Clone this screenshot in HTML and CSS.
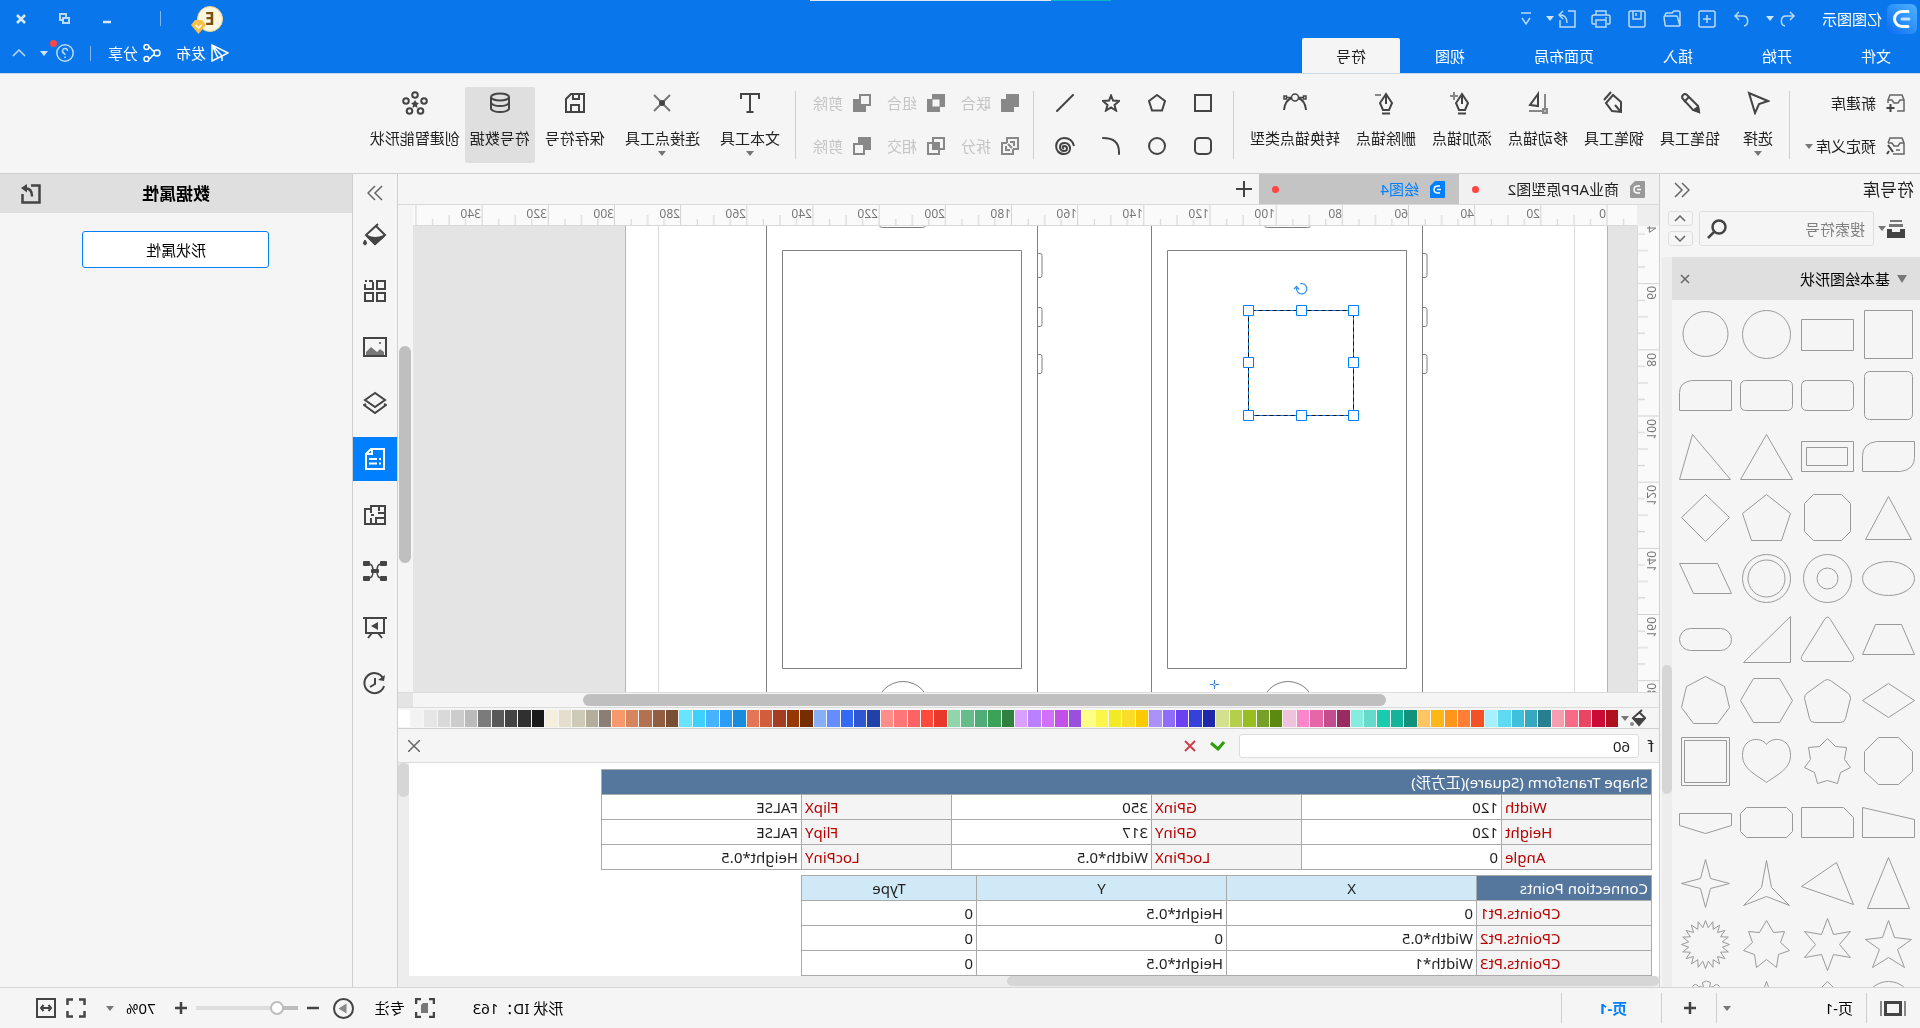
FILE: index.html
```html
<!DOCTYPE html>
<html lang="zh-CN">
<head>
<meta charset="utf-8">
<meta name="viewport" content="width=device-width, initial-scale=1">
<title>亿图图示</title>
<link rel="stylesheet" href="styles.css">
</head>
<body>
<div class="app">

<header class="titlebar">
  <div class="capture-strip"><i class="capture-teal"></i><i class="capture-light"></i></div>
  <div class="title-row">
    <svg class="logo" width="30" height="30" viewBox="0 0 30 30"><defs><linearGradient id="lg" x1="0" y1="0" x2="1" y2="1"><stop offset="0" stop-color="#4db4ff"/><stop offset="1" stop-color="#0b6cf5"/></linearGradient></defs><rect width="30" height="30" rx="6" fill="url(#lg)"/><path d="M9 7.5h6a7.5 7.5 0 0 1 0 15H9" fill="none" stroke="#fff" stroke-width="3" stroke-linecap="round"/><path d="M8 15H15" stroke="#bfe2ff" stroke-width="3" stroke-linecap="round"/></svg>
    <span class="app-name">亿图图示</span>
    <div class="quick">
      <button class="qbtn" aria-label="撤销"><svg class="ico thin" width="18" height="18" viewBox="0 0 18 18"><path d="M6 2 2 6l4 4M2 6h8c6 0 6 9 1 10"/></svg></button>
      <button class="qbtn caret-btn" aria-label="撤销列表"><i class="caret light"></i></button>
      <button class="qbtn" aria-label="重做"><svg class="ico thin" width="18" height="18" viewBox="0 0 18 18"><path d="M12 2l4 4-4 4M16 6H8c-6 0-6 9-1 10"/></svg></button>
      <button class="qbtn" aria-label="新建"><svg class="ico thin" width="18" height="18" viewBox="0 0 18 18"><rect x="1" y="1" width="16" height="16" rx="2"/><path d="M9 5v8M5 9h8"/></svg></button>
      <button class="qbtn" aria-label="打开"><svg class="ico thin" width="18" height="18" viewBox="0 0 18 18"><path d="M1 16V3Q1 1 3 1h4l2 2h5q2 0 2 3M1 16h14q1 0 1-1L17 7q0-1-1-1H5Q4 6 3.500 7L1 16"/></svg></button>
      <button class="qbtn" aria-label="保存"><svg class="ico thin" width="18" height="18" viewBox="0 0 18 18"><rect x="1" y="1" width="16" height="16" rx="2"/><path d="M5 1v8h8V1M10 3v3"/></svg></button>
      <button class="qbtn" aria-label="打印"><svg class="ico thin" width="20" height="18" viewBox="0 0 20 18"><path d="M5 5V1h10v4M4 14H2q-1 0-1-1V7q0-2 2-2h14q2 0 2 2v6q0 1-1 1h-2M5 10h10v7H5zM4 8h2"/></svg></button>
      <button class="qbtn export" aria-label="导出"><svg class="ico thin" width="18" height="18" viewBox="0 0 18 18"><path d="M8 1H1v16h15v-7M13 1l4 4-4 4M16 5q-7 0-7 8"/></svg></button>
      <button class="qbtn caret-btn" aria-label="导出列表"><i class="caret light"></i></button>
      <button class="qbtn more" aria-label="自定义快速访问"><svg class="ico thin" width="10" height="14" viewBox="0 0 10 14"><path d="M0 1h10M1 6l4 6 4-6"/></svg></button>
    </div>
    <div class="window-tools">
      <button class="avatar" aria-label="账户">E<svg class="badge" width="15" height="15" viewBox="0 0 15 15"><path d="M4 1h7l4 5-7.500 9L0 6z" fill="#fbc04a"/><path d="M4.500 6l3 3 3-3" fill="none" stroke="#fff" stroke-width="1.5"/></svg></button>
      <i class="vline"></i>
      <button class="wbtn" aria-label="最小化"><svg class="ico bold" width="10" height="10" viewBox="0 0 10 10"><path d="M1 8h8"/></svg></button>
      <button class="wbtn" aria-label="还原"><svg class="ico" width="12" height="12" viewBox="0 0 12 12"><path d="M1 5h6v5H1zM4 4V1h6v6H8"/></svg></button>
      <button class="wbtn" aria-label="关闭"><svg class="ico bold" width="10" height="10" viewBox="0 0 10 10"><path d="M1 1l8 8M9 1L1 9"/></svg></button>
    </div>
  </div>
  <div class="tab-row">
    <nav class="menu">
      <button class="menu-tab first">文件</button><button class="menu-tab">开始</button><button class="menu-tab">插入</button><button class="menu-tab">页面布局</button><button class="menu-tab">视图</button><button class="menu-tab active">符号</button>
    </nav>
    <div class="share-tools">
      <button class="sbtn publish"><svg class="ico thin white" width="18" height="18" viewBox="0 0 18 18"><path d="M1 9L17 1v16l-6-3zM11 14L17 1 7 12v5"/></svg>发布</button>
      <button class="sbtn"><svg class="ico thin white" width="18" height="18" viewBox="0 0 18 18"><circle cx="4" cy="9" r="3"/><circle cx="14.500" cy="3" r="2.500"/><circle cx="14.500" cy="15" r="2.500"/><path d="M6.500 7.500L9 6q1-2 3-3M6.500 10.500L9 12q1 2 3 3"/></svg>分享</button>
      <i class="vline"></i>
      <button class="help" aria-label="帮助"><svg class="ico thin" width="18" height="18" viewBox="0 0 18 18"><circle cx="9" cy="9" r="8.200"/><path d="M6.500 7a2.500 2.500 0 1 1 3.500 2.300q-1 .5-1 1.700M9 12.500v1.500"/></svg><i class="red-dot"></i></button>
      <button class="qbtn" aria-label="帮助列表"><i class="caret light"></i></button>
      <button class="collapse" aria-label="收起功能区"><svg class="ico thin" width="14" height="8" viewBox="0 0 14 8"><path d="M1 7l6-6 6 6"/></svg></button>
    </div>
  </div>
</header>

<section class="ribbon" aria-label="符号工具">
  <div class="group libs">
    <button class="row-btn"><svg class="ico mid thin" width="19" height="18" viewBox="0 0 19 18"><path d="M8 17H1V6l2-5h12l2 5v3M1 6h4l2 3h4l2-3h4"/><path d="M14.500 10v8M10.500 14h8" stroke="#444" stroke-width="2"/></svg>新建库</button>
    <button class="row-btn"><svg class="ico mid thin" width="19" height="18" viewBox="0 0 19 18"><path d="M12 17H1V6l2-5h12l2 5M1 6h4l2 3h4l2-3h4M5 13h4"/><path d="M17 8l-5 7M16 14l2 3" stroke="#444" stroke-width="2"/></svg>预定义库<i class="caret"></i></button>
  </div>
  <div class="group tools">
    <button class="tool"><svg class="ico" width="24" height="24" viewBox="0 0 24 24"><path d="M2 10L21 2l-6 20-4-9z"/></svg><span>选择</span><i class="caret"></i></button>
    <button class="tool"><svg class="ico" width="24" height="24" viewBox="0 0 24 24"><path d="M3 21l1-6L15 4q2-2 4 0 2 2 0 4L9 19zM13 6l5 5"/><path d="M3 21l1-5 4 3z" fill="#444"/></svg><span>铅笔工具</span></button>
    <button class="tool"><svg class="ico" width="24" height="24" viewBox="0 0 24 24"><path d="M5 21l0-10 8-7 7 8-6 8zM5 21l6-7M15 1l7 8"/></svg><span>钢笔工具</span></button>
    <button class="tool"><svg class="ico" width="24" height="24" viewBox="0 0 24 24"><path d="M5 3v14M7 20h14" stroke="#888"/><path d="M3 18h4v4H3z" stroke="#888" fill="#bbb"/><path d="M12 3l8 11-8 1z"/></svg><span>移动锚点</span></button>
    <button class="tool"><svg class="ico" width="24" height="24" viewBox="0 0 24 24"><path d="M12 3l6 9-3 7H9l-3-7zM12 3v10M8 22.500h8"/><path d="M20 1v8M16 5h8" stroke="#888"/></svg><span>添加锚点</span></button>
    <button class="tool"><svg class="ico" width="24" height="24" viewBox="0 0 24 24"><path d="M12 3l6 9-3 7H9l-3-7zM12 3v10M8 22.500h8"/><path d="M17 4h6" stroke="#888"/></svg><span>删除锚点</span></button>
    <button class="tool"><svg class="ico" width="24" height="24" viewBox="0 0 24 24"><path d="M1 19q1-10 8-12M23 19q-1-10-8-12"/><circle cx="12" cy="6.500" r="3.500" stroke-width="1.5"/><path d="M1 5h2.500v3H1zM20.500 5H23v3h-2.500zM3.500 6.500H8M16 6.500h4.500" stroke-width="1.5"/></svg><span>转换锚点类型</span></button>
  </div>
  <div class="group prims">
    <button class="prim" aria-label="矩形"><svg class="ico" width="18" height="18" viewBox="0 0 18 18"><rect x="1" y="1" width="16" height="16"/></svg></button>
    <button class="prim" aria-label="五边形"><svg class="ico" width="18" height="18" viewBox="0 0 18 18"><path d="M9 1l8 6-3 9.500H4L1 7z"/></svg></button>
    <button class="prim" aria-label="星形"><svg class="ico" width="18" height="18" viewBox="0 0 18 18"><path d="M9 1.500l2 5 6 .5-4.500 4 1.500 5.500-5-3-5 3L5.500 11 1 7l6-.5z"/></svg></button>
    <button class="prim" aria-label="直线"><svg class="ico" width="18" height="18" viewBox="0 0 18 18"><path d="M1 1l16 16" stroke-linecap="round"/></svg></button>
    <button class="prim" aria-label="圆角矩形"><svg class="ico" width="18" height="18" viewBox="0 0 18 18"><rect x="1" y="1" width="16" height="16" rx="4"/></svg></button>
    <button class="prim" aria-label="圆"><svg class="ico" width="18" height="18" viewBox="0 0 18 18"><circle cx="9" cy="9" r="8"/></svg></button>
    <button class="prim" aria-label="弧"><svg class="ico" width="18" height="18" viewBox="0 0 18 18"><path d="M1 17V15Q1 1 17 1" stroke-linecap="round"/></svg></button>
    <button class="prim" aria-label="螺旋线"><svg class="ico" width="20" height="18" viewBox="0 0 20 18"><path d="M1 9Q3 1 11 1c10 0 11 16 0 16C3 17 3 6 10.500 6c6 0 6 8 .5 8-4 0-4-5 0-5 2 0 2 2 0 2.500"/></svg></button>
  </div>
  <div class="group bools">
    <button class="row-btn" disabled><svg width="18" height="18" viewBox="0 0 18 18"><path d="M0 0h13v5h5v13H5v-5H0z" fill="#888"/></svg>联合</button>
    <button class="row-btn" disabled><svg width="18" height="18" viewBox="0 0 18 18"><path d="M0 0h13v5h5v13H5v-5H0z" fill="#888"/><rect x="5.500" y="5.500" width="7" height="7" fill="#f5f5f5"/></svg>组合</button>
    <button class="row-btn" disabled><svg width="18" height="18" viewBox="0 0 18 18"><path d="M5 5h13v13H5z" fill="#888"/><rect x="1" y="1" width="10" height="10" fill="#f5f5f5" stroke="#888" stroke-width="2"/></svg>剪除</button>
    <button class="row-btn" disabled><svg class="ico" width="18" height="18" viewBox="0 0 18 18"><g stroke="#888"><path d="M6 12H1V1h11v5M12 6h5v11H6v-5"/><path d="M5 9V5h4M13 9v4H9M7 11l4-4"/></g></svg>拆分</button>
    <button class="row-btn" disabled><svg width="18" height="18" viewBox="0 0 18 18"><path d="M1 1h11v11H1zM6 6h11v11H6z" fill="none" stroke="#888" stroke-width="2"/><path d="M6 6h6v6H6z" fill="#888"/></svg>相交</button>
    <button class="row-btn" disabled><svg width="18" height="18" viewBox="0 0 18 18"><path d="M0 0h13v13H0z" fill="#888"/><rect x="7" y="7" width="10" height="10" fill="#f5f5f5" stroke="#888" stroke-width="2"/></svg>剪除</button>
  </div>
  <div class="group wide">
    <button class="tool"><svg class="ico" width="24" height="24" viewBox="0 0 24 24"><path d="M3 8V3h18v5M12 3v18M8.500 21h7"/></svg><span>文本工具</span><i class="caret"></i></button>
    <button class="tool"><svg class="ico" width="24" height="24" viewBox="0 0 24 24"><path d="M4 4l16 16M20 4L4 20" stroke="#777"/><circle cx="12" cy="12" r="2" fill="#444"/></svg><span>连接点工具</span><i class="caret"></i></button>
    <button class="tool"><svg class="ico" width="24" height="24" viewBox="0 0 24 24"><path d="M3 3h13l5 5v13H3zM8 3v5h6V3M8 21v-7h8v7"/></svg><span>保存符号</span></button>
    <button class="tool snug on"><svg class="ico" width="24" height="24" viewBox="0 0 24 24"><ellipse cx="12" cy="6" rx="9" ry="3.500"/><path d="M3 6v12q2 3 9 3t9-3V6M3 12q2 3 9 3t9-3"/></svg><span>符号数据</span></button>
    <button class="tool snug"><svg class="ico" width="26" height="24" viewBox="0 0 26 24"><circle cx="13" cy="4" r="2.800"/><circle cx="4" cy="10" r="2.800"/><circle cx="22" cy="10" r="2.800"/><circle cx="7.500" cy="20" r="2.800"/><circle cx="18.500" cy="20" r="2.800"/><path d="M13 9l1.500 2.500 2.500.5-2 2 .5 3-2.500-1.500-2.500 1.500.5-3-2-2 2.500-.5z" fill="#444" stroke="none"/></svg><span>创建智能形状</span></button>
  </div>
</section>

<main class="work">
  <aside class="library">
    <div class="lib-head"><h2>符号库</h2><button class="plain" aria-label="收起"><svg class="ico mid thin" width="16" height="16" viewBox="0 0 16 16"><path d="M8 1L1 8l7 7M15 1L8 8l7 7"/></svg></button></div>
    <div class="lib-search">
      <button class="plain libpick" aria-label="选择库"><svg width="18" height="18" viewBox="0 0 18 18"><path d="M3 0h12v2H3zM2 4h14v3H2z" fill="#777"/><path d="M0 9h5v3h8V9h5v9H0z" fill="#444"/></svg><i class="caret"></i></button>
      <label class="search"><input type="text" placeholder="搜索符号" aria-label="搜索符号"><svg class="ico bold" width="20" height="20" viewBox="0 0 20 20"><circle cx="8" cy="8" r="6.500"/><path d="M13 13l6 6"/></svg></label>
      <div class="updown"><button aria-label="上一个"><svg class="ico mid thin" width="12" height="7" viewBox="0 0 12 7"><path d="M1 6l5-5 5 5"/></svg></button><button aria-label="下一个"><svg class="ico mid thin" width="12" height="7" viewBox="0 0 12 7"><path d="M1 1l5 5 5-5"/></svg></button></div>
    </div>
    <div class="lib-body">
      <div class="lib-list">
        <div class="lib-section"><i class="tri"></i><h3>基本绘图形状</h3><button class="plain" aria-label="关闭"><svg class="ico mid thin" width="10" height="10" viewBox="0 0 10 10"><path d="M1 1l8 8M9 1L1 9"/></svg></button></div>
        <div class="shapes">
          <svg viewBox="-30.5 -30.5 61 61"><path d="M-24-24h48v48h-48z"/></svg>
          <svg viewBox="-30.5 -30.5 61 61"><path d="M-26-15h52v31h-52z"/></svg>
          <svg viewBox="-30.5 -30.5 61 61"><circle r="24"/></svg>
          <svg viewBox="-30.5 -30.5 61 61"><circle r="22.500" cy="-.5"/></svg>
          <svg viewBox="-30.5 -30.5 61 61"><rect x="-24" y="-24" width="48" height="48" rx="5"/></svg>
          <svg viewBox="-30.5 -30.5 61 61"><rect x="-26" y="-15" width="52" height="30" rx="5"/></svg>
          <svg viewBox="-30.5 -30.5 61 61"><rect x="-26" y="-15" width="52" height="30" rx="5"/></svg>
          <svg viewBox="-30.5 -30.5 61 61"><path d="M-26-15h40q12 2 12 12v18h-52z"/></svg>
          <svg viewBox="-30.5 -30.5 61 61"><path d="M-26-15h38q14 2 14 14v16h-38q-14-2-14-14z"/></svg>
          <svg viewBox="-30.5 -30.5 61 61"><path d="M-26-15h52v30h-52zM-20-9h41v18h-41z"/></svg>
          <svg viewBox="-30.5 -30.5 61 61"><path d="M0-22L26 23h-52z"/></svg>
          <svg viewBox="-30.5 -30.5 61 61"><path d="M13-22L26 23h-51z"/></svg>
          <svg viewBox="-30.5 -30.5 61 61"><path d="M0-21L23 22h-46z"/></svg>
          <svg viewBox="-30.5 -30.5 61 61"><path d="M-14-23h28l9 9v28l-9 9h-28l-9-9v-28z"/></svg>
          <svg viewBox="-30.5 -30.5 61 61"><path d="M0-23L24-4 15 23h-30l-9-27z"/></svg>
          <svg viewBox="-30.5 -30.5 61 61"><path d="M0-23L24 0 0 24-24 0z"/></svg>
          <svg viewBox="-30.5 -30.5 61 61"><ellipse rx="26" ry="17"/></svg>
          <svg viewBox="-30.5 -30.5 61 61"><circle r="24"/><circle r="10.500"/></svg>
          <svg viewBox="-30.5 -30.5 61 61"><circle r="24"/><circle r="18.500"/></svg>
          <svg viewBox="-30.5 -30.5 61 61"><path d="M-12-15h38L12 15h-38z"/></svg>
          <svg viewBox="-30.5 -30.5 61 61"><path d="M-13-15h26L26 15h-52z"/></svg>
          <svg viewBox="-30.5 -30.5 61 61"><path d="M-3-20q3-5 6 0L26 17q1 5-4 5h-44q-5 0-4-5z"/></svg>
          <svg viewBox="-30.5 -30.5 61 61"><path d="M-24-23V23h47z"/></svg>
          <svg viewBox="-30.5 -30.5 61 61"><rect x="-26" y="-11" width="52" height="22" rx="11"/></svg>
          <svg viewBox="-30.5 -30.5 61 61"><path d="M0-17L26 0 0 17-26 0z"/></svg>
          <svg viewBox="-30.5 -30.5 61 61"><path d="M-3-20q3-2 6 0L21-7q2 2 2 5l-5 20q-1 4-5 4h-26q-4 0-5-4l-5-20q0-3 2-5z"/></svg>
          <svg viewBox="-30.5 -30.5 61 61"><path d="M-13-22h26L26 0 13 22h-26L-26 0z"/></svg>
          <svg viewBox="-30.5 -30.5 61 61"><path d="M0-24L19-14 24 7 12 23h-24L-24 7l5-21z"/></svg>
          <svg viewBox="-30.5 -30.5 61 61"><path d="M-10-24h20l14 14v20l-14 13h-20l-14-13v-20z"/></svg>
          <svg viewBox="-30.5 -30.5 61 61"><path d="M0-23L8-15l11 1-2 12 6 8-10 5-3 11-10-3-10 3-3-11-10-5 6-8-2-12 11-1z"/></svg>
          <svg viewBox="-30.5 -30.5 61 61"><path d="M0-17C5-25 24-25 24-6 24 8 9 14 0 21-9 14-24 8-24-6-24-25-5-25 0-17z"/></svg>
          <svg viewBox="-30.5 -30.5 61 61"><path d="M-24-24h48v48h-48zM-21-21h42v42h-42z"/></svg>
          <svg viewBox="-30.5 -30.5 61 61"><path d="M-26-3L26-15v30h-52z"/></svg>
          <svg viewBox="-30.5 -30.5 61 61"><path d="M-16-15h42v30h-52V-5z"/></svg>
          <svg viewBox="-30.5 -30.5 61 61"><path d="M-20-15h40l6 6v18l-6 6h-40l-6-6v-18z"/></svg>
          <svg viewBox="-30.5 -30.5 61 61"><path d="M-26-9h52V3L0 11-26 3z"/></svg>
          <svg viewBox="-30.5 -30.5 61 61"><path d="M0-26L21 25h-42z"/></svg>
          <svg viewBox="-30.5 -30.5 61 61"><path d="M26 3L-9-21l-17 42z"/></svg>
          <svg viewBox="-30.5 -30.5 61 61"><path d="M0-23L5 4l18 18-23-9-23 9L-5 4z"/></svg>
          <svg viewBox="-30.5 -30.5 61 61"><path d="M0-24L5-5 24 0 5 5 0 24-5 5-24 0-5-5z"/></svg>
          <svg viewBox="-30.5 -30.5 61 61"><path d="M0-24L6-7l17 2L9 5l7 18-16-10-16 10L-9 5-23-5-6-7z"/></svg>
          <svg viewBox="-30.5 -30.5 61 61"><path d="M0-26L6-10l17-3L12 0l11 13-17-3L0 26-6 10l-17 3L-12 0l-11-13 17 3z"/></svg>
          <svg viewBox="-30.5 -30.5 61 61"><path d="M0-24L7-12l11-1-4 11 9 8-11 4-2 13-10-8-10 8-2-13-11-4 9-8-4-11 11 1z"/></svg>
          <svg viewBox="-30.5 -30.5 61 61"><defs><path id="q" d="M0-24L2.700-16.800 7.400-22.800 7.700-15.100 14.100-19.400 12-12 19.400-14.100 15.100-7.700 22.800-7.400 16.800-2.700 24 0"/></defs><use href="#q"/><use href="#q" transform="rotate(90)"/><use href="#q" transform="rotate(180)"/><use href="#q" transform="rotate(270)"/></svg>
          <svg viewBox="-30.5 -30.5 61 61"><ellipse rx="24" ry="24"/></svg>
          <svg viewBox="-30.5 -30.5 61 61"><path d="M0-24L10-14l10 2-3 12 6 10-46 0 6-10-3-12 10-2z"/></svg>
          <svg viewBox="-30.5 -30.5 61 61"><path d="M0-24L5-10 20-6 0 20-20-6-5-10z"/></svg>
          <svg viewBox="-30.5 -30.5 61 61"><path d="M-14-19q3-4 6 0l4 1-1-5q4-3 8 0l-1 5 5-1q3-4 6 0l2 5-30 0z"/></svg>
        </div>
      </div>
      <div class="vbar"><i></i></div>
    </div>
  </aside>

  <section class="center">
    <div class="doc-tabs">
      <button class="doc-tab"><svg width="15" height="18" viewBox="0 0 15 18"><path d="M0 2q0-1 1-1h9l5 5v11q0 1-1 1H1q-1 0-1-1z" fill="#999"/><path d="M5 6h2q4 0 4 3.500T7 13H5M4 9.500h4" fill="none" stroke="#fff" stroke-width="1.5"/></svg><span>商业APP原型图2</span><i class="red-dot"></i></button>
      <button class="doc-tab active"><svg width="15" height="18" viewBox="0 0 15 18"><path d="M0 2q0-1 1-1h9l5 5v11q0 1-1 1H1q-1 0-1-1z" fill="#0080ff"/><path d="M5 6h2q4 0 4 3.500T7 13H5M4 9.500h4" fill="none" stroke="#fff" stroke-width="1.5"/></svg><span>绘图4</span><i class="red-dot"></i></button>
      <button class="plain add-tab" aria-label="新建文档"><svg class="ico" width="18" height="18" viewBox="0 0 18 18"><path d="M9 1v16M1 9h16"/></svg></button>
    </div>
    <div class="stage">
      <div class="corner"></div>
      <svg class="ruler-h" width="100%" height="21">
        <defs><pattern id="th" x="29.500" width="66.170" height="21" patternUnits="userSpaceOnUse"><path d="M.5 0v21M17 14v7M33.500 10v11M50 14v7" stroke="#d2d2d2"/></pattern></defs>
        <rect width="100%" height="21" fill="url(#th)"/>
        <g class="ruler-text">
          <text x="31" y="13">0</text><text x="97" y="13">20</text><text x="163" y="13">40</text><text x="229" y="13">60</text><text x="295" y="13">80</text><text x="362" y="13">100</text><text x="428" y="13">120</text><text x="494" y="13">140</text><text x="560" y="13">160</text><text x="626" y="13">180</text><text x="692" y="13">200</text><text x="759" y="13">220</text><text x="825" y="13">240</text><text x="891" y="13">260</text><text x="957" y="13">280</text><text x="1023" y="13">300</text><text x="1090" y="13">320</text><text x="1156" y="13">340</text>
        </g>
      </svg>
      <div class="gutter-top"></div>
      <svg class="ruler-v" width="22" height="100%">
        <defs><pattern id="tv" y="-9" width="22" height="66.170" patternUnits="userSpaceOnUse"><path d="M0 .5h22M14 17h8M11 33.500h11M14 50h8" stroke="#d2d2d2"/></pattern></defs>
        <rect width="22" height="100%" fill="url(#tv)"/>
        <g class="ruler-text" text-anchor="end">
          <text transform="translate(12 -7) rotate(-90)">40</text><text transform="translate(12 60) rotate(-90)">60</text><text transform="translate(12 127) rotate(-90)">80</text><text transform="translate(12 193) rotate(-90)">100</text><text transform="translate(12 259) rotate(-90)">120</text><text transform="translate(12 325) rotate(-90)">140</text><text transform="translate(12 391) rotate(-90)">160</text><text transform="translate(12 457) rotate(-90)">180</text>
        </g>
      </svg>
      <div class="canvas">
        <svg width="100%" height="100%">
          <g transform="translate(-283 -226)" fill="none">
            <path d="M312.500 200H1294.500V760H312.500z" fill="#fff" stroke="#b4b4b4"/>
            <path d="M345.500 200V760M1261.500 200V760" stroke="#dcdcdc"/>
            <g id="phone" stroke="#808080">
              <path d="M497.500 200V760M768.500 200V760M513.500 250.500H752.500V668.500H513.500z"/>
              <path d="M497 253.500h-2q-2 0-2 2v20q0 2 2 2h2M497 307.500h-2q-2 0-2 2v15q0 2 2 2h2M497 354.500h-2q-2 0-2 2v15q0 2 2 2h2M608.500 222q0 5.500 4 5.500h40q4 0 4-5.500"/>
              <circle cx="632" cy="708" r="26.500"/>
            </g>
            <use href="#phone" x="385"/>
            <path d="M566.500 310.500H671.500V415.500H566.500z" stroke="#0080ff"/>
            <path d="M566.500 310.500H671.500V415.500H566.500z" stroke="#111" stroke-dasharray="4 3"/>
            <g fill="#fff" stroke="#0080ff">
              <path d="M561.500 305.500h10v10h-10zM613.500 305.500h10v10h-10zM666.500 305.500h10v10h-10zM561.500 357.500h10v10h-10zM666.500 357.500h10v10h-10zM561.500 410.500h10v10h-10zM613.500 410.500h10v10h-10zM666.500 410.500h10v10h-10z"/>
            </g>
            <path d="M620 283.800a5.200 5.200 0 1 0 3.500 4.200M621 289.500l2.500-3 2.500 2.500" stroke="#2a8ef5" stroke-width="1.2"/>
            <path d="M705.500 680v3M705.500 686v3M701 684.500h3M707 684.500h3M704 684.500l1.500-1.500 1.500 1.500-1.500 1.500z" stroke="#2a7fd5"/>
          </g>
        </svg>
      </div>
      <div class="vscroll"><i></i></div>
    </div>
    <div class="hscroll"><div class="hscroll-track"><i></i></div><div class="hscroll-corner"></div></div>
    <div class="palette">
      <button class="plain fill-pick" aria-label="填充颜色"><svg class="ico" width="16" height="18" viewBox="0 0 16 18"><path d="M4 1l9 8-6 6-6-6 6-6"/><path d="M2 10h10l-5 6z" fill="#444"/><circle cx="14" cy="15" r="1" stroke="#888"/></svg><i class="caret"></i></button>
      <div class="swatches" id="swatches"></div>
    </div>
    <div class="formula">
      <label for="fx">f</label><input id="fx" type="text" value="60">
      <button class="plain" aria-label="确认"><svg class="ico heavy" width="15" height="11" viewBox="0 0 15 11"><path d="M1 2l6 7 7-6" stroke="#2f9e0c"/></svg></button>
      <button class="plain" aria-label="取消"><svg class="ico" width="12" height="12" viewBox="0 0 12 12"><path d="M1 1l10 10M11 1L1 11" stroke="#d0404a"/></svg></button>
      <button class="plain end" aria-label="关闭"><svg class="ico mid thin" width="12" height="12" viewBox="0 0 12 12"><path d="M0 0l12 12M12 0L0 12"/></svg></button>
    </div>
    <div class="sheet">
      <div class="sheet-row">
        <div class="tables">
          <table class="t1">
            <colgroup><col class="c150"><col class="c200"><col class="c150"><col class="c200"><col class="c150"><col class="c200"></colgroup>
            <tr><th class="title" colspan="6">Shape Transform (Square)(正方形)</th></tr>
            <tr><th>Width</th><td>120</td><th>GPinX</th><td>350</td><th>FlipX</th><td>FALSE</td></tr>
            <tr><th>Height</th><td>120</td><th>GPinY</th><td>317</td><th>FlipY</th><td>FALSE</td></tr>
            <tr><th>Angle</th><td>0</td><th>LocPinX</th><td>Width*0.5</td><th>LocPinY</th><td>Height*0.5</td></tr>
          </table>
          <table class="t2">
            <colgroup><col class="c175"><col class="c250"><col class="c250"><col class="c175"></colgroup>
            <tr><th class="title">Connection Points</th><th class="col">X</th><th class="col">Y</th><th class="col">Type</th></tr>
            <tr><th>CPoints.Pt1</th><td>0</td><td>Height*0.5</td><td>0</td></tr>
            <tr><th>CPoints.Pt2</th><td>Width*0.5</td><td>0</td><td>0</td></tr>
            <tr><th>CPoints.Pt3</th><td>Width*1</td><td>Height*0.5</td><td>0</td></tr>
          </table>
        </div>
        <div class="sheet-v"><i></i></div>
      </div>
      <div class="sheet-h"><i></i></div>
    </div>
  </section>

  <nav class="dock">
    <button class="fold" aria-label="展开面板"><svg class="ico mid thin" width="16" height="16" viewBox="0 0 16 16"><path d="M1 1l7 7-7 7M8 1l7 7-7 7"/></svg></button>
    <button aria-label="填充"><svg class="ico" width="24" height="24" viewBox="0 0 24 24"><path d="M9 1l12 11-9 9-10-9 9-9"/><path d="M3 13q9 4 17 0l-8 8z" fill="#444"/><path d="M22 17q3 4 0 5-3-1 0-5z" fill="#444" stroke-width="1"/></svg></button>
    <button aria-label="主题"><svg class="ico" width="24" height="24" viewBox="0 0 24 24"><path d="M2 2h8v8H2zM2 14h8v8H2zM14 14h8v8h-8zM14 2h3v1M22 5v5h-8V3M20 2h2"/></svg></button>
    <button aria-label="图片"><svg class="ico" width="24" height="24" viewBox="0 0 24 24"><path d="M1 3h22v18H1z"/><path d="M3 20v-3l4-3 3 3 6-5 5 5v3z" fill="#777" stroke="none"/><path d="M6 7h2v2H6z" fill="#777" stroke="none"/></svg></button>
    <button aria-label="图层"><svg class="ico" width="24" height="24" viewBox="0 0 24 24"><path d="M12 2l10 7-10 7L2 9zM3 13l-2 1 11 8 11-8-2-1"/></svg></button>
    <button class="on" aria-label="数据属性"><svg class="ico" width="24" height="24" viewBox="0 0 24 24"><path d="M3 2h13l5 5v15H3zM15 2v5h6M6 12h2M10 12h8M6 16.500h2M10 16.500h8"/></svg></button>
    <button aria-label="平面图"><svg class="ico" width="24" height="24" viewBox="0 0 24 24"><path d="M2 3h14v3h6v15H2zM8 3v5M3 10h6M16 6v4M2 15h9v6M16 15v6M13 12h3"/></svg></button>
    <button aria-label="思维导图"><svg class="ico" width="24" height="24" viewBox="0 0 24 24"><g fill="#444" stroke="none"><rect x="0" y="2" width="7" height="5" rx="1"/><rect x="17" y="2" width="7" height="5" rx="1"/><rect x="0" y="17" width="7" height="5" rx="1"/><rect x="17" y="17" width="7" height="5" rx="1"/><rect x="8" y="10" width="8" height="4" rx="1"/></g><path d="M6 5q4 0 4 7t-4 7M18 5q-4 0-4 7t4 7" stroke-width="1.5"/></svg></button>
    <button aria-label="演示"><svg class="ico" width="24" height="24" viewBox="0 0 24 24"><path d="M0 3h24M3 3v15h18V3M9 18l-4 5M15 18l4 5"/><path d="M9 7l7 4-7 4z" fill="#444" stroke="none"/></svg></button>
    <button aria-label="历史"><svg class="ico" width="24" height="24" viewBox="0 0 24 24"><path d="M4 7a10 10 0 1 1-1 8M12 7v6l5 3"/><path d="M2 4l1 6 6-1z" fill="#444" stroke="none"/></svg></button>
  </nav>

  <aside class="props">
    <div class="props-head"><h2>数据属性</h2><button class="plain" aria-label="弹出"><svg class="ico bold" width="20" height="20" viewBox="0 0 20 20"><path d="M10 1.500H1.500v17h17V10"/><path d="M14 0l6 4-6 4.500z" fill="#444" stroke="none"/><path d="M15 4.500q-6 0-6 8"/></svg></button></div>
    <button class="shape-props">形状属性</button>
  </aside>
</main>

<footer class="status">
  <button class="plain view" aria-label="页面视图"><svg class="ico" width="28" height="15" viewBox="0 0 28 15"><path d="M2 0v15M26 0v15" stroke="#888"/><path d="M6.500 1.500h15v12h-15z" stroke-width="3"/></svg></button>
  <button class="page-pick"><span>页-1</span><i class="caret"></i></button>
  <button class="page-add" aria-label="添加页"><svg class="ico bold" width="12" height="12" viewBox="0 0 12 12"><path d="M6 0v12M0 6h12"/></svg></button>
  <button class="page-tab">页-1</button>
  <div class="status-right">
    <span class="shape-id">形状 ID：163</span>
    <button class="plain focus"><svg class="ico bold" width="20" height="20" viewBox="0 0 20 20"><path d="M1 6V1h5M14 1h5v5M19 14v5h-5M6 19H1v-5"/><path d="M7 5h5l2 2v8H7z" fill="#777" stroke="none"/></svg>专注</button>
    <button class="plain play" aria-label="播放"><svg class="ico" width="21" height="21" viewBox="0 0 21 21"><circle cx="10.500" cy="10.500" r="9.500"/><path d="M7.500 5.500l8 5-8 5z" fill="#888" stroke="none"/></svg></button>
    <div class="zoom">
      <button class="plain" aria-label="缩小"><svg class="ico bold" width="12" height="12" viewBox="0 0 12 12"><path d="M0 6h12"/></svg></button>
      <input type="range" min="0" max="100" value="16" aria-label="缩放">
      <button class="plain" aria-label="放大"><svg class="ico bold" width="12" height="12" viewBox="0 0 12 12"><path d="M6 0v12M0 6h12"/></svg></button>
    </div>
    <button class="plain percent">70%<i class="caret"></i></button>
    <button class="plain" aria-label="全屏"><svg class="ico bold" width="20" height="20" viewBox="0 0 20 20"><path d="M1.500 7V1.500H7M13 1.500h5.500V7M18.500 13v5.500H13M7 18.500H1.500V13"/></svg></button>
    <button class="plain" aria-label="适合宽度"><svg class="ico" width="20" height="20" viewBox="0 0 20 20"><path d="M1 1h18v18H1zM5 10h10M7.500 7L5 10l2.500 3M12.500 7l2.500 3-2.500 3"/></svg></button>
  </div>
</footer>
</div>
<script src="palette.js"></script>
</body>
</html>
```
FILE: palette.js
```js
// Quick colour palette, in drawing order.
const colours = (
  "ae101d cb0a35 eb4565 f76b86 f89daf 277f91 37a8c0 3fc1dd 5fdaf2 a8f0ff " +
  "f45126 ff7f36 ff951b ffb717 ffc562 12927c 15b39a 1accae 66dacb 86edde " +
  "9a2b62 c54c8d e666a8 fb86ca f0c3dc 5e8911 76a027 98be22 b4d04b d3e18f " +
  "1e29aa 3641d9 6b41f0 8f6cfa ac92f8 fbcb00 fadd29 f0ea27 faf64a feff85 " +
  "9b4fdd c34fe9 d26ffb bb80ff daa0ff 30803f 3ca257 50ad77 64bd8a 91d5aa " +
  "e8372b ff4a3b fb6365 ff7678 ff8e8b 2140a8 2f57d0 336af4 668dff 88aff6 " +
  "762e00 963800 a33e25 d15d3e e27656 188bdd 2c9df5 45b3ff 3ed0fe 68e4ff " +
  "784e34 925e42 b27150 d6865e f7996c 8b7f75 b3ad9b cecab8 e5decf f4eedc " +
  "191919 303030 444444 595959 7b7b7b bbbbbb cccccc d9d9d9 e6e6e6 f3f3f3 ffffff"
).split(" ");
const box = document.getElementById("swatches");
for (const c of colours) {
  const b = document.createElement("button");
  b.style.background = "#" + c;
  b.setAttribute("aria-label", "#" + c);
  box.append(b);
}
```
FILE: styles.css
```css
* { box-sizing: border-box; }

body {
  margin: 0;
  font: 15px/20px "Noto Sans", "Noto Sans CJK SC", sans-serif;
  color: #222;
  background: #f5f5f5;
}

button, input { font: inherit; color: inherit; }
button { margin: 0; padding: 0; border: 0; background: none; white-space: nowrap; }
h2, h3 { margin: 0; font-weight: 400; }
svg { display: block; flex: none; }

/* The whole workspace is mirrored left to right. */
.app {
  display: flex;
  flex-direction: column;
  height: 100vh;
  overflow: hidden;
  transform: scaleX(-1);
}

.ico { fill: none; stroke: currentColor; stroke-width: 2; color: #444; }
.ico.thin { stroke-width: 1.5; }
.ico.bold { stroke-width: 2.5; }
.ico.heavy { stroke-width: 3; }
.ico.mid { color: #666; }
.caret { display: block; border: 4px solid transparent; border-top: 5px solid #777; border-bottom: 0; }
.caret.light { border-top-color: #cfe4fb; }
.plain { display: flex; align-items: center; }
.red-dot { display: block; width: 7px; height: 7px; border-radius: 50%; background: #ff4444; }

/* Title bar */
.titlebar { position: relative; flex: none; height: 73px; background: #0976eb; color: #fff; }
.titlebar .ico { color: #b9dafa; }
.titlebar .ico.white { color: #fff; }
.titlebar .ico.bold { color: #d8eafc; }
.capture-strip { position: absolute; top: 0; left: 809px; display: flex; height: 1px; }
.capture-teal { width: 60px; background: #0cb4c8; }
.capture-light { width: 241px; background: #dfe8f0; }
.title-row { display: flex; align-items: center; height: 37px; padding: 0 0 0 3px; }
.app-name { margin-left: 5px; }
.quick { display: flex; align-items: center; margin-left: 26px; gap: 17px; }
.qbtn { display: flex; align-items: center; justify-content: center; }
.quick .caret-btn { margin: 0 -2px 0 -13px; }
.quick .export { margin-left: -2px; }
.window-tools { display: flex; align-items: center; margin-left: auto; }
.window-tools .vline { margin: 0 31px 0 36px; }
.avatar {
  position: relative; width: 26px; height: 26px; border: 1px solid #f5d58a; border-radius: 50%;
  background: #fff6df; color: #7a5012; font-size: 17px; font-weight: 700; line-height: 24px;
}
.badge { position: absolute; left: 16px; top: 12px; }
.vline { width: 1px; height: 15px; background: #7db8f5; }
.wbtn { display: flex; justify-content: center; width: 43px; }
.tab-row { display: flex; height: 36px; padding-top: 1px; }
.menu { display: flex; gap: 1px; }
.menu-tab { padding: 0 34px; }
.menu-tab.first { padding-left: 29px; }
.menu-tab.active { background: #f5f5f5; color: #222; border-radius: 2px 2px 0 0; }
.share-tools { display: flex; align-items: center; height: 30px; margin-left: auto; padding-right: 12px; }
.sbtn { display: flex; align-items: center; gap: 5px; margin-right: 17px; }
.sbtn.publish { margin-right: 15px; }
.share-tools .vline { margin-right: 16px; }
.help { position: relative; margin-right: 8px; }
.help .red-dot { position: absolute; left: 17px; top: -4px; }
.collapse { margin-left: 14px; }

/* Ribbon */
.ribbon { display: flex; flex: none; height: 101px; padding: 13px 0 10px; border-top: 1px solid #c9d7e6; border-bottom: 1px solid #cfcfcf; background: #f5f5f5; }
.group { position: relative; display: flex; }
.group + .group::before { content: ""; align-self: center; width: 1px; height: 68px; background: #cfcfcf; }
.row-btn { display: flex; align-items: center; gap: 10px; height: 20px; }
.row-btn .caret { margin-left: -7px; }
.row-btn:disabled { color: #c4c4c4; }
.libs { flex-direction: column; gap: 23px; width: 130px; padding: 6px 0 0 15px; }
.tool { display: flex; flex-direction: column; align-items: center; min-width: 60px; padding: 4px 8px 0; border-radius: 2px; }
.tool > span { margin-top: 14px; height: 18px; line-height: 18px; }
.tool .caret { margin-top: 4px; }
.tools { padding-right: 8px; }
.tools::before { margin-right: 1px; }
.prims { display: grid; grid-template-columns: 1px repeat(4, 46px); grid-template-rows: 20px 20px; row-gap: 23px; align-content: start; width: 200px; padding-top: 6px; }
.group.prims::before { grid-row: 1 / 3; margin-top: -2px; align-self: start; }
.prim { display: flex; align-items: center; justify-content: center; width: 46px; margin-left: 7px; }
.bools { display: grid; grid-template-columns: 15px 74px 74px 74px; grid-template-rows: 20px 20px; row-gap: 23px; align-content: start; width: 238px; padding-top: 6px; }
.group.bools::before { grid-row: 1 / 3; margin-top: -2px; align-self: start; }
.wide .tool { padding: 4px 10px 0; }
.wide::before { margin-right: 5px; }
.wide .tool.snug { padding: 4px 5px 0; }
.tool.on { background: #dfdfdf; }

/* Workspace */
.work { display: flex; flex: 1; min-height: 0; }
.library { display: flex; flex: none; flex-direction: column; width: 261px; border-right: 1px solid #cfcfcf; }
.lib-head { display: flex; align-items: center; justify-content: space-between; height: 32px; padding: 0 14px 0 6px; }
.lib-head h2 { font-size: 17px; }
.lib-search { display: flex; align-items: center; height: 35px; margin: 5px 8px 11px 15px; }
.libpick { gap: 1px; }
.search { display: flex; align-items: center; width: 175px; height: 35px; margin: 0 6px 0 4px; padding: 0 7px 0 8px; border: 1px solid #dedede; border-radius: 3px; }
.search input { flex: 1; min-width: 0; border: 0; padding: 0; background: none; outline: 0; }
.search input::placeholder { color: #808080; opacity: 1; }
.search .ico { transform: scaleX(1); }
.updown { display: flex; flex-direction: column; gap: 5px; }
.updown button { display: flex; align-items: center; justify-content: center; width: 25px; height: 15px; border: 1px solid #dedede; border-radius: 3px; }
.lib-body { display: flex; flex: 1; min-height: 0; }
.lib-list { flex: 1; overflow: hidden; }
.lib-section { display: flex; align-items: center; height: 43px; padding: 0 8px 0 13px; background: #dfdfdf; }
.tri { margin-right: 7px; border: 5px solid transparent; border-top: 8px solid #777; border-bottom: 0; }
.lib-section h3 { flex: 1; font-size: 15px; color: #000; }
.shapes { display: grid; grid-template-columns: repeat(4, 61px); grid-auto-rows: 61px; padding: 4px 0 0 1px; }
.shapes svg { width: 61px; height: 61px; fill: none; stroke: #999; stroke-width: 1; }
.vbar { width: 10px; margin-right: 2px; background: #ededed; padding-top: 408px; }
.vbar i { display: block; height: 129px; border-radius: 5px; background: #d6d6d6; }

.center { display: flex; flex: 1; flex-direction: column; min-width: 0; }
.doc-tabs { display: flex; height: 31px; flex: none; border-bottom: 1px solid #d9d9d9; }
.doc-tab { display: flex; align-items: center; gap: 11px; width: 200px; padding: 0 13px 0 14px; background: #f1f1f1; }
.doc-tab .red-dot { margin-left: auto; }
.doc-tab.active { background: #c4c4c4; color: #0080ff; }
.add-tab { margin-left: 6px; }
.stage { display: grid; flex: 1; grid-template-columns: 22px 1fr 15px; grid-template-rows: 21px 1fr; min-height: 0; }
.corner { background: #eee; }
.ruler-h, .ruler-v { background: #fafafa; overflow: hidden; }
.ruler-h { border-bottom: 1px solid #d9d9d9; }
.ruler-v { border-right: 1px solid #d9d9d9; min-height: 0; }
.ruler-text { font-size: 12px; fill: #777; }
.canvas { overflow: hidden; min-width: 0; min-height: 0; background: #e4e4e4; }
.vscroll { padding: 120px 1px 0 2px; }
.vscroll i { display: block; height: 217px; border-radius: 6px; background: #bfbfbf; }
.hscroll { display: flex; flex: none; height: 16px; border-top: 1px solid #dcdcdc; border-bottom: 1px solid #dcdcdc; }
.hscroll-track { flex: 1; padding: 1px 170px 0 273px; }
.hscroll-track i { display: block; height: 12px; border-radius: 6px; background: #bfbfbf; }
.hscroll-corner { width: 15px; background: #e4e4e4; }
.palette { display: flex; flex: none; align-items: center; height: 21px; border-bottom: 1px solid #cfcfcf; padding-left: 13px; }
.fill-pick { width: 28px; gap: 1px; }
.swatches { display: flex; flex: 1; gap: 1px; height: 17px; }
.swatches button { flex: 1; }
.formula { display: flex; flex: none; align-items: center; height: 34px; padding: 0 10px 0 5px; border-bottom: 1px solid #dcdcdc; }
.formula label { width: 15px; font-size: 17px; }
.formula input { width: 400px; height: 24px; margin-right: 14px; padding: 0 8px; border: 1px solid #dcdcdc; border-radius: 3px; background: #fff; }
.formula .plain + .plain { margin-left: 14px; }
.formula .plain.end { margin-left: auto; }
.sheet { flex: none; height: 224px; display: flex; flex-direction: column; }
.sheet-row { display: flex; flex: 1; min-height: 0; }
.tables { flex: 1; overflow: hidden; padding: 6px 0 0 7px; background: #fff; }
table { border-collapse: collapse; table-layout: fixed; }
.t1 { width: 1051px; }
.t2 { width: 851px; margin-top: 5px; }
.c150 { width: 150px; }
.c200 { width: 200px; }
.c175 { width: 175px; }
.c250 { width: 250px; }
td, th { height: 25px; padding: 0 3px; border: 1px solid #aaa; font-weight: 400; text-align: left; line-height: 20px; }
th { background: #f4f4f4; color: #b80000; text-align: right; }
th.title { background: #56779d; color: #fff; text-align: left; }
th.col { background: #cfeaf6; color: #222; text-align: center; }
.sheet-v { width: 11px; background: #ededed; }
.sheet-v i { display: block; height: 34px; border-radius: 5px; background: #d6d6d6; }
.sheet-h { height: 11px; background: #ededed; }
.sheet-h i { display: block; width: 652px; height: 10px; border-radius: 5px; background: #d6d6d6; }

.dock { display: flex; flex: none; flex-direction: column; gap: 12px; width: 45px; border-left: 1px solid #cfcfcf; }
.dock button { display: flex; align-items: center; justify-content: center; height: 44px; }
.dock .fold { height: 27px; padding-top: 11px; }
.dock .on { background: #0080ff; }
.dock .on .ico { color: #fff; }

.props { flex: none; width: 353px; border-left: 1px solid #cfcfcf; }
.props-head { display: flex; align-items: center; height: 39px; padding: 0 21px 0 41px; background: #dfdfdf; }
.props-head h2 { flex: 1; font-size: 17px; font-weight: 700; text-align: center; color: #000; }
.shape-props { display: block; width: 187px; height: 37px; margin: 18px auto 0; border: 1px solid #0080ff; border-radius: 3px; background: #fff; color: #000; }

/* Status bar */
.status { display: flex; flex: none; align-items: center; height: 41px; border-top: 1px solid #d6d6d6; background: #f5f5f5; color: #000; }
.status > button { height: 30px; }
.view { padding: 0 12px 0 13px; border-right: 1px solid #cfcfcf; }
.page-pick { display: flex; align-items: center; justify-content: space-between; width: 150px; padding: 0 6px 0 13px; border-right: 1px solid #cfcfcf; }
.page-add { display: flex; align-items: center; width: 55px; padding-left: 20px; border-right: 1px solid #cfcfcf; }
.page-tab { width: 100px; padding-right: 3px; border-right: 1px solid #cfcfcf; color: #0080ff; font-weight: 700; }
.status-right { display: flex; align-items: center; margin-left: auto; padding-right: 36px; gap: 10px; }
.shape-id { margin-right: 28px; }
.focus { gap: 10px; margin-right: 11px; }
.play { margin-right: 4px; }
.zoom { display: flex; align-items: center; gap: 9px; margin-right: 9px; }
.percent { gap: 12px; margin-right: 10px; }
input[type="range"] { appearance: none; width: 102px; height: 14px; margin: 0; background: linear-gradient(to right, #bdbdbd 20%, #dedede 20%) center / 100% 4px no-repeat; }
input[type="range"]::-webkit-slider-thumb { appearance: none; width: 14px; height: 14px; border: 2px solid #bdbdbd; border-radius: 50%; background: #fff; }
```
